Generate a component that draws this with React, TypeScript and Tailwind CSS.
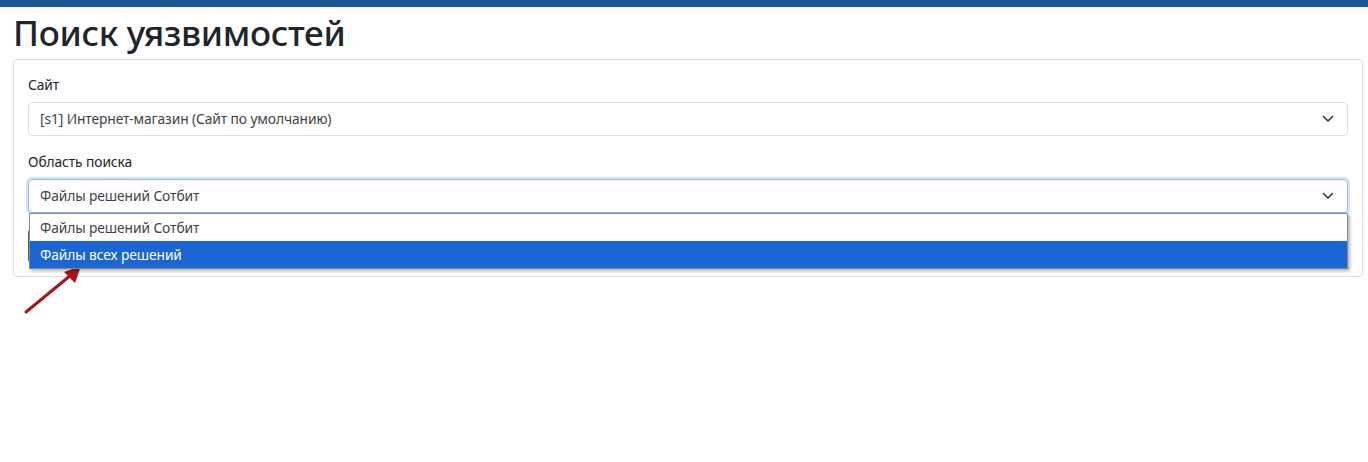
import React from 'react';

const Chevron = () => (
  <svg width="12" height="8" viewBox="0 0 12 8" fill="none">
    <polyline points="1.5,1.5 6,6 10.5,1.5" stroke="#343a40" strokeWidth="1.6" strokeLinecap="round" strokeLinejoin="round" />
  </svg>
);

export default function App() {
  return (
    <div className="relative w-[1368px] h-[462px] bg-white overflow-hidden text-[#212529]" style={{ fontFamily: '"Noto Sans", "Open Sans", sans-serif' }}>
      <div className="h-[7px] bg-[#1b5597]" />
      <h1 className="pl-[13px] pt-[4px] h-[52px] text-[35px] leading-[44px] font-medium tracking-[-0.3px]">Поиск уязвимостей</h1>

      <div className="ml-[13px] mr-[5px] border border-[#dee2e6] rounded-[4px] px-[14px] pt-[13px] pb-[13px] text-[13.8px] tracking-[-0.1px]">
        <div className="leading-[24px] mb-[5px]">Сайт</div>
        <div className="h-[34px] border border-[#dcdfe3] rounded-[4px] flex items-center justify-between pl-[11px] pr-[13px] text-[#3d4349]">
          <span>[s1] Интернет-магазин (Сайт по умолчанию)</span>
          <Chevron />
        </div>

        <div className="leading-[24px] mt-[14px] mb-[5px]">Область поиска</div>
        <div className="relative">
          <div className="h-[34px] border border-[#8fbaf8] rounded-[4px] shadow-[0_0_0_2px_rgba(13,110,253,0.18)] flex items-center justify-between pl-[11px] pr-[13px] text-[#3d4349]">
            <span>Файлы решений Сотбит</span>
            <Chevron />
          </div>
          <div className="absolute left-[1px] right-0 top-[34px] z-10 bg-white border border-[#8a8a8a] shadow-[2px_2px_3px_rgba(0,0,0,0.3)]">
            <div className="h-[27px] flex items-center pl-[10px] pt-[1px] text-[#3d4349]">Файлы решений Сотбит</div>
            <div className="h-[27px] flex items-center pl-[10px] pt-[1px] bg-[#1a66d2] text-white">Файлы всех решений</div>
          </div>
        </div>

        {/* button hidden under the open list */}
        <button className="block mt-[16px] h-[34px] w-[120px] rounded-[4px] bg-[#5c636a]" />
      </div>

      <svg className="absolute left-0 top-0 pointer-events-none" width="1368" height="462">
        <line x1="26" y1="312" x2="71" y2="275" stroke="#a8141b" strokeWidth="3" strokeLinecap="round" />
        <polygon points="81,266 64,272 75,283" fill="#a8141b" />
      </svg>
    </div>
  );
}
